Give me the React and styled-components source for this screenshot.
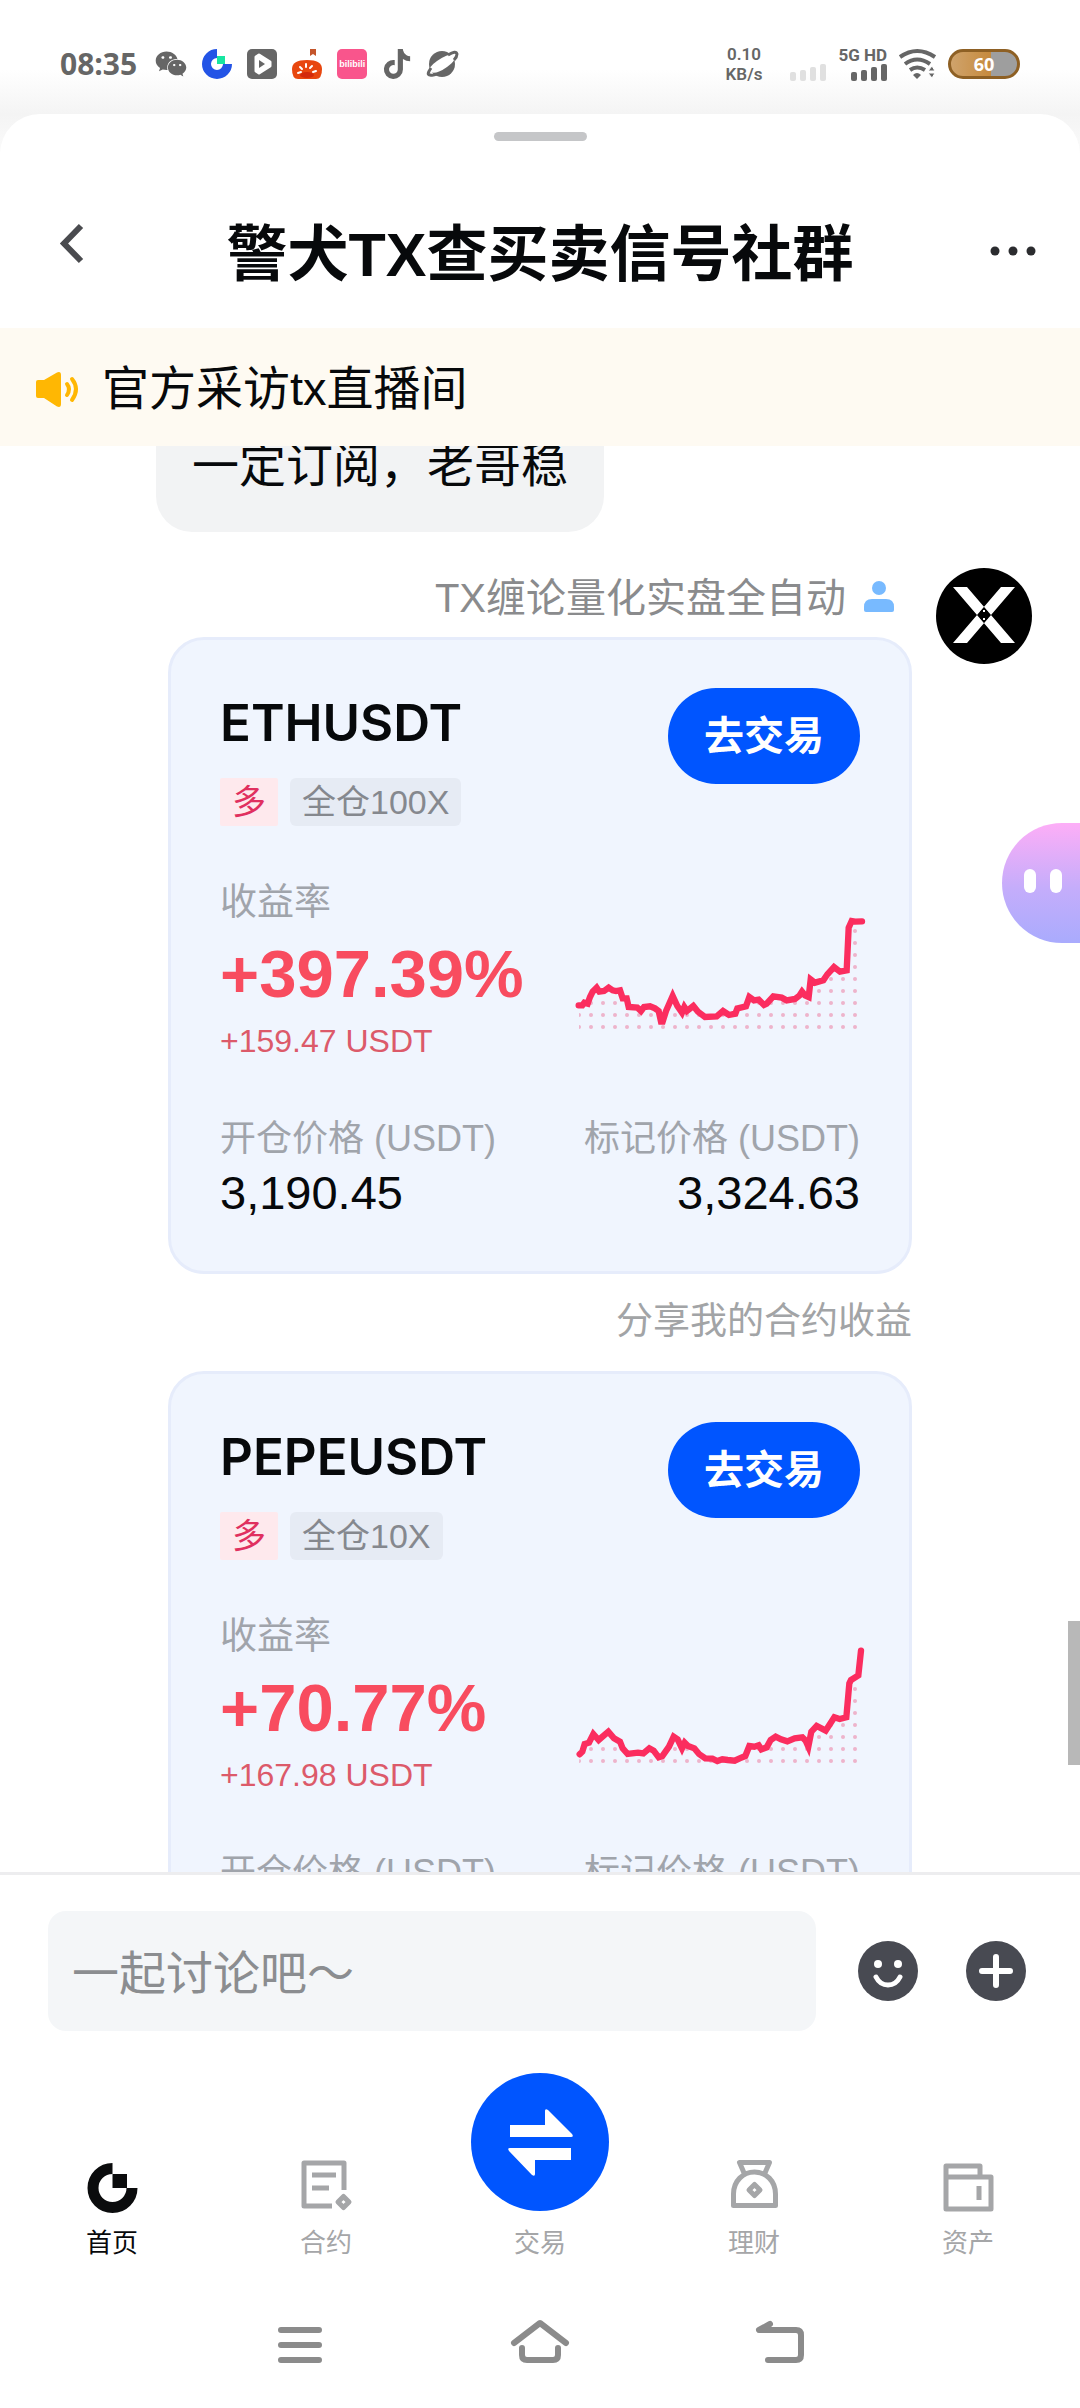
import { useLayoutEffect, useRef } from "react";
import styled, { createGlobalStyle } from "styled-components";
import { FaTiktok, FaWeixin } from "react-icons/fa6";

const positions = [
  {
    id: 1,
    symbol: "ETHUSDT",
    side: "多",
    leverage: "全仓100X",
    rate: "+397.39%",
    profit: "+159.47 USDT",
    open: "3,190.45",
    mark: "3,324.63",
    line: "116,433 127,433 133,425 143,428 150,408 158,392 170,380 178,392 192,390 206,380 218,388 228,390 240,388 248,412 260,412 266,438 292,440 303,450 312,438 330,436 345,442 356,450 363,482 368,482 378,450 398,405 412,435 426,455 433,438 441,450 460,435 474,452 495,468 530,466 549,450 567,462 586,458 592,442 618,436 628,408 642,418 656,416 672,432 680,428 700,406 725,410 740,418 765,414 778,404 786,392 795,403 806,408 812,355 825,365 850,358 862,340 882,318 900,332 920,328 926,200 935,180 945,182 966,181",
  },
  {
    id: 2,
    symbol: "PEPEUSDT",
    side: "多",
    leverage: "全仓10X",
    rate: "+70.77%",
    profit: "+167.98 USDT",
    open: "0.00001",
    mark: "0.00001",
    line: "119,478 127,470 134,447 147,443 160,417 176,435 205,410 222,430 240,440 248,460 263,477 294,473 310,475 328,460 341,467 356,487 367,483 387,455 401,425 413,433 426,460 434,443 444,453 463,460 477,477 496,490 517,491 532,498 547,493 563,495 584,497 599,490 616,483 628,453 643,455 656,451 664,463 680,457 692,435 707,425 723,433 742,439 764,430 787,427 797,437 805,455 814,410 830,393 857,407 883,367 899,372 919,367 928,265 933,255 955,241 963,167",
  },
];

const App = () => {
  return (
    <Screen>
      <GlobalStyle />
      <StatusBar />
      <Sheet>
        <Handle />
        <Header>
          <IconButton aria-label="返回">
            <svg width="60" height="60" fill="none" stroke="#4a4b4f" strokeWidth="6">
              <path d="M39 5L22 22.500L39 40" />
            </svg>
          </IconButton>
          <Title>警犬TX查买卖信号社群</Title>
          <IconButton aria-label="更多">
            <svg width="60" height="60" fill="#2b2c2f">
              <circle cx="17" cy="30" r="4.500" />
              <circle cx="35" cy="30" r="4.500" />
              <circle cx="53" cy="30" r="4.500" />
            </svg>
          </IconButton>
        </Header>
        <Notice>
          <svg width="43" height="37" fill="none" stroke="#ffb703" strokeWidth="4" strokeLinecap="round">
            <path
              d="M3 9H9L22 1.500Q26 0 26 4V33Q26 37 22 35.500L9 27H3Q1 27 1 25V11Q1 9 3 9Z"
              fill="#ffb703"
              stroke="none"
            />
            <path d="M32 13Q36 18 32 24M37 8Q45 18 37 29" />
          </svg>
          官方采访tx直播间
        </Notice>
        <Chat />
        <Composer>
          <MessageInput aria-label="消息" placeholder="一起讨论吧～" />
          <ComposerIcons>
            <IconButton aria-label="表情">
              <svg width="60" height="60">
                <circle cx="30" cy="30" r="30" fill="#484a52" />
                <circle cx="20" cy="23" r="4" fill="#fff" />
                <circle cx="40" cy="23" r="4" fill="#fff" />
                <path d="M18 36Q22 44 30 44T42 36" fill="none" stroke="#fff" strokeWidth="5" strokeLinecap="round" />
              </svg>
            </IconButton>
            <IconButton aria-label="添加">
              <svg width="60" height="60">
                <circle cx="30" cy="30" r="30" fill="#484a52" />
                <path d="M16 30H44M30 16V44" stroke="#fff" strokeWidth="6" strokeLinecap="round" />
              </svg>
            </IconButton>
          </ComposerIcons>
        </Composer>
        <TabBar />
        <SystemBar />
      </Sheet>
    </Screen>
  );
};

const StatusBar = () => {
  return (
    <StatusRow>
      <StatusGroup>
        <Clock>08:35</Clock>
        <AppIcons>
          <FaWeixin size={32} color="#666" />
          <svg width="30" height="30" viewBox="0 0 30 30">
            <path d="M15 4.500A10.500 10.500 0 1 0 25.500 15" fill="none" stroke="#2354e6" strokeWidth="9" />
            <path d="M15 7H23V15H15Z" fill="#17e6a1" />
          </svg>
          <svg width="30" height="30" viewBox="0 0 30 30">
            <rect width="30" height="30" rx="5" fill="#666" />
            <path d="M9 8L12 6L23 13V17L12 24L9 22Z" fill="#fff" stroke="#fff" strokeWidth="3" strokeLinejoin="round" />
            <path d="M12 11L18 15L12 19Z" fill="#666" />
          </svg>
          <svg width="30" height="30" viewBox="0 0 30 30">
            <path d="M18 0H24V7L21 5L18 7Z" fill="#c4552b" />
            <path d="M0 20Q0 11 15 11T30 20Q30 30 24 30H6Q0 30 0 20Z" fill="#e8470f" />
            <ellipse cx="15" cy="26" rx="7" ry="3" fill="#d32a0c" />
            <path d="M6 24L9 23M8 18L10 20M14 15V18M20 17L18 19M24 22L21 23" stroke="#fff" strokeWidth="2" strokeLinecap="round" />
          </svg>
          <PinkBadge>bilibili</PinkBadge>
          <FaTiktok size={30} color="#666" />
          <svg width="31" height="30" viewBox="0 0 31 30">
            <circle cx="15" cy="15" r="13" fill="#666" />
            <path d="M3 23Q0 19 10 12T27 5Q31 10 20 18T3 23Z" fill="#fff" />
            <path d="M4 19Q-1 26 3 26Q6 27 10 25M21 6Q29 1 30 5Q30 8 27 11" fill="none" stroke="#666" strokeWidth="3" />
          </svg>
        </AppIcons>
      </StatusGroup>
      <StatusGroup>
        <NetSpeed>
          <span>0.10</span>
          <span>KB/s</span>
        </NetSpeed>
        <SignalSlot>
          <Bars color="#e0e0e0" />
        </SignalSlot>
        <SignalSlot>
          <NetType>5G HD</NetType>
          <Bars color="#666" />
        </SignalSlot>
        <svg width="37" height="30" viewBox="0 0 37 30" fill="none" stroke="#666" strokeWidth="4">
          <path d="M1 8Q18-4 36 8M6 15Q18 6 31 15M11 21Q18 16 26 21" />
          <path d="M14 26Q18 22 22 26L18 30Z" fill="#666" stroke="none" />
          <path d="M29 22L33 17L36 22ZM29 24H36L33 29Z" fill="#666" stroke="#fff" strokeWidth="1" />
        </svg>
        <Battery>60</Battery>
      </StatusGroup>
    </StatusRow>
  );
};

const Bars = ({ color }) => {
  return (
    <svg width="36" height="17" fill={color}>
      <rect x="0" y="8" width="6" height="9" rx="2" />
      <rect x="10" y="6" width="6" height="11" rx="2" />
      <rect x="20" y="3" width="6" height="14" rx="2" />
      <rect x="30" y="0" width="6" height="17" rx="2" />
    </svg>
  );
};

const Chat = () => {
  const listRef = useRef(null);

  useLayoutEffect(() => {
    listRef.current.scrollTop = 46;
  }, []);

  return (
    <ChatArea>
      <ChatList ref={listRef}>
        <Bubble>一定订阅，老哥稳</Bubble>
        <Message>
          <MessageBody>
            <Sender>
              TX缠论量化实盘全自动
              <svg width="30" height="35" fill="#78baff">
                <circle cx="15" cy="7" r="7" />
                <path d="M0 29V26Q0 18 8 18H22Q30 18 30 26V29Q30 31 28 31H2Q0 31 0 29Z" />
              </svg>
            </Sender>
            {positions.map((position) => {
              return (
                <div key={position.id}>
                  <PositionCard position={position} />
                  <ShareText>分享我的合约收益</ShareText>
                </div>
              );
            })}
          </MessageBody>
          <svg width="96" height="96">
            <circle cx="48" cy="48" r="48" />
            <path d="M17 19H31L79 75H65ZM79 19H65L17 75H31Z" fill="#fff" />
            <path d="M44 44L48 40L52 44ZM44 50L48 54L52 50Z" />
            <path d="M47 43H49M47 51H49" stroke="#fff" strokeWidth="2" />
          </svg>
        </Message>
      </ChatList>
      <Assistant aria-label="助手">
        <AssistantEye />
        <AssistantEye />
      </Assistant>
      <ScrollThumb />
    </ChatArea>
  );
};

const PositionCard = ({ position }) => {
  return (
    <Card>
      <CardTop>
        <div>
          <Symbol>{position.symbol}</Symbol>
          <Tags>
            <Tag $long>{position.side}</Tag>
            <Tag>{position.leverage}</Tag>
          </Tags>
        </div>
        <TradeButton>去交易</TradeButton>
      </CardTop>
      <Yield>
        <div>
          <YieldLabel>收益率</YieldLabel>
          <Rate>{position.rate}</Rate>
          <Profit>{position.profit}</Profit>
        </div>
        <Sparkline id={position.id} line={position.line} />
      </Yield>
      <Prices>
        <Price>
          <dt>开仓价格 (USDT)</dt>
          <dd>{position.open}</dd>
        </Price>
        <Price $end>
          <dt>标记价格 (USDT)</dt>
          <dd>{position.mark}</dd>
        </Price>
      </Prices>
    </Card>
  );
};

const Sparkline = ({ id, line }) => {
  return (
    <Chart viewBox="102 147 858 360">
      <defs>
        <pattern id={`dots-${id}`} x="135" y="444" width="36" height="36" patternUnits="userSpaceOnUse">
          <circle cx="18" cy="18" r="6" fill="#eeb4cb" />
        </pattern>
        <clipPath id={`area-${id}`}>
          <polygon points={`${line} 966,505 117,505`} />
        </clipPath>
      </defs>
      <rect x="117" y="147" width="840" height="360" fill={`url(#dots-${id})`} clipPath={`url(#area-${id})`} />
      <polyline points={line} fill="none" stroke="#fb2d5f" strokeWidth="19" strokeLinecap="round" />
    </Chart>
  );
};

const TabBar = () => {
  return (
    <Tabs>
      <Tab href="#home" $active>
        <svg width="51" height="51">
          <path d="M25.500 8.500A19.500 19.500 0 1 0 45 28" fill="none" stroke="#0b0c0d" strokeWidth="11" />
          <path d="M25.500 14H40V28H25.500Z" fill="#0b0c0d" />
        </svg>
        首页
      </Tab>
      <Tab href="#futures">
        <svg width="51" height="51" fill="none" stroke="#a5a6a8" strokeWidth="5" strokeLinejoin="round">
          <path d="M43 30V3H3V46H31M11 15H35M11 28H28" />
          <path d="M42.500 36.500L48 42L42.500 47.500L37 42Z" />
        </svg>
        合约
      </Tab>
      <Tab href="#trade">
        <svg width="138" height="138">
          <circle cx="69" cy="69" r="69" fill="#0055ff" />
          <path
            d="M39 52H74V38Q74 35 77 37L101 61Q103 64 100 64H39ZM100 75H39Q36 75 38 78L61 102Q64 104 64 101V87H100Z"
            fill="#fff"
          />
        </svg>
        交易
      </Tab>
      <Tab href="#finance">
        <svg width="51" height="51" fill="none" stroke="#a5a6a8" strokeWidth="5" strokeLinejoin="round">
          <path d="M4.500 45.500V34C4.500 21 14 12 25.500 12S46.500 21 46.500 34V45.500ZM15.500 14L10.500 2.500H40.500L35.500 14" />
          <path d="M25.500 24.500L31 30L25.500 35.500L20 30Z" />
        </svg>
        理财
      </Tab>
      <Tab href="#assets">
        <svg width="51" height="51" fill="none" stroke="#a5a6a8" strokeWidth="5" strokeLinejoin="round">
          <path d="M3 18V6H37V17M3 17H48V49H3ZM36 26V40" />
        </svg>
        资产
      </Tab>
    </Tabs>
  );
};

const SystemBar = () => {
  return (
    <SystemRow>
      <IconButton aria-label="最近任务">
        <SystemIcon>
          <path d="M11 15H49M11 30H49M11 45H49" />
        </SystemIcon>
      </IconButton>
      <IconButton aria-label="主屏幕">
        <SystemIcon>
          <path d="M4 28L30 8L56 28M12 33V40Q12 45 17 45H43Q48 45 48 40V33" />
        </SystemIcon>
      </IconButton>
      <IconButton aria-label="后退">
        <SystemIcon>
          <path d="M20 9L9 15H46Q51 15 51 20V40Q51 45 46 45H18" />
        </SystemIcon>
      </IconButton>
    </SystemRow>
  );
};

const GlobalStyle = createGlobalStyle`
  * {
    box-sizing: border-box;
  }

  body {
    margin: 0;
    background: #fff;
    color: #07090b;
    font-family: "Liberation Sans", "Noto Sans CJK SC", sans-serif;
  }

  svg {
    display: block;
    flex-shrink: 0;
    overflow: visible;
  }

  button, input {
    font-family: inherit;
  }
`;

const Screen = styled.div`
  display: flex;
  flex-direction: column;
  height: 100vh;
  background: linear-gradient(#fff 70px, #f4f4f4 114px, #fafafa 150px);
`;

const StatusRow = styled.div`
  display: flex;
  justify-content: space-between;
  height: 114px;
  padding: 44px 60px 30px;
`;

const StatusGroup = styled.div`
  display: flex;
  align-items: center;
  gap: 12px;
`;

const Clock = styled.span`
  color: #666;
  font-family: "Open Sans", sans-serif;
  font-size: 30px;
  font-weight: 700;
  line-height: 40px;
`;

const AppIcons = styled.div`
  display: flex;
  align-items: center;
  gap: 15px;
  padding-left: 6px;
`;

const PinkBadge = styled.span`
  width: 30px;
  border-radius: 5px;
  background: #f9558c;
  color: #fff;
  font-size: 9px;
  font-weight: 700;
  line-height: 30px;
  text-align: center;
`;

const NetSpeed = styled.span`
  display: flex;
  flex-direction: column;
  align-items: center;
  margin-right: 16px;
  color: #666;
  font-family: Roboto, sans-serif;
  font-size: 17px;
  font-weight: 600;
  line-height: 20px;
`;

const SignalSlot = styled.span`
  display: flex;
  flex-direction: column;
  align-items: flex-end;
  justify-content: flex-end;
  height: 34px;
`;

const NetType = styled.span`
  color: #666;
  font-family: Roboto, sans-serif;
  font-size: 17px;
  font-weight: 700;
  line-height: 17px;
`;

const Battery = styled.span`
  width: 72px;
  height: 30px;
  border: 3px solid #8e6024;
  border-radius: 15px;
  background: linear-gradient(90deg, #cfa36c, #c68a3d 60%, #9e9e9e 60%);
  color: #fff;
  font-family: "Open Sans", sans-serif;
  font-size: 18px;
  font-weight: 700;
  line-height: 24px;
  text-align: center;
`;

const Sheet = styled.main`
  display: flex;
  flex: 1;
  flex-direction: column;
  min-height: 0;
  border-radius: 40px 40px 0 0;
  background: #fff;
`;

const Handle = styled.div`
  align-self: center;
  width: 93px;
  height: 9px;
  margin: 18px 0 64px;
  border-radius: 5px;
  background: #c5c6c8;
`;

const Header = styled.header`
  display: flex;
  align-items: center;
  justify-content: space-between;
  padding: 0 42px 31px;
`;

const IconButton = styled.button`
  padding: 0;
  border: 0;
  background: none;
`;

const Title = styled.h1`
  margin: 0;
  padding-top: 8px;
  font-size: 61px;
  font-weight: 700;
  line-height: 84px;
`;

const Notice = styled.div`
  display: flex;
  align-items: center;
  gap: 24px;
  padding: 31px 35px 27px;
  background: #fefaf2;
  font-size: 47px;
  line-height: 60px;
`;

const ChatArea = styled.section`
  position: relative;
  display: flex;
  flex: 1;
  flex-direction: column;
  min-height: 0;
`;

const ChatList = styled.div`
  flex: 1;
  min-height: 0;
  overflow-y: scroll;
  scrollbar-width: none;
`;

const Bubble = styled.p`
  width: fit-content;
  margin: 0 0 36px 156px;
  padding: 36px;
  border-radius: 36px;
  background: #f2f3f4;
  font-size: 47px;
  line-height: 60px;
`;

const Message = styled.article`
  display: flex;
  align-items: flex-start;
  gap: 24px;
  padding: 0 48px 0 168px;
`;

const MessageBody = styled.div`
  flex: 1;
`;

const Sender = styled.div`
  display: flex;
  align-items: center;
  justify-content: flex-end;
  gap: 18px;
  margin-bottom: 9px;
  padding-right: 18px;
  color: #8a8b8d;
  font-size: 40px;
  line-height: 60px;
`;

const Card = styled.div`
  padding: 48px 49px;
  border: 3px solid #e6ecfb;
  border-radius: 36px;
  background: #f0f5fe;
`;

const CardTop = styled.div`
  display: flex;
  align-items: flex-start;
  justify-content: space-between;
`;

const Symbol = styled.h2`
  margin: 0 0 20px;
  font-family: Inter, sans-serif;
  font-size: 51px;
  font-weight: 600;
  line-height: 70px;
`;

const Tags = styled.div`
  display: flex;
  gap: 12px;
`;

const Tag = styled.span`
  padding: 0 12px;
  border-radius: ${(props) => (props.$long ? "2px" : "6px")};
  background: ${(props) => (props.$long ? "#fee9ed" : "#e6ebf4")};
  color: ${(props) => (props.$long ? "#e0305f" : "#85888e")};
  font-size: 34px;
  line-height: 48px;
`;

const TradeButton = styled.button`
  padding: 0 36px;
  border: 0;
  border-radius: 48px;
  background: #0055ff;
  color: #fff;
  font-size: 40px;
  font-weight: 700;
  line-height: 96px;
`;

const Yield = styled.div`
  display: flex;
  align-items: center;
  justify-content: space-between;
  margin: 53px 0 54px;
`;

const YieldLabel = styled.div`
  color: #a0a4ab;
  font-size: 37px;
  line-height: 48px;
`;

const Rate = styled.div`
  color: #f84c5f;
  font-size: 67px;
  font-weight: 700;
  line-height: 94px;
`;

const Profit = styled.div`
  color: #dc5a6a;
  font-size: 32px;
  line-height: 40px;
`;

const Chart = styled.svg`
  width: 286px;
  height: 120px;
`;

const Prices = styled.dl`
  display: flex;
  justify-content: space-between;
  margin: 0;
`;

const Price = styled.div`
  text-align: ${(props) => (props.$end ? "right" : "left")};

  dt {
    color: #a0a4ab;
    font-size: 36px;
    line-height: 48px;
  }

  dd {
    margin: 0;
    font-size: 47px;
    line-height: 60px;
  }
`;

const ShareText = styled.p`
  margin: 0;
  padding: 24px 0 25px;
  color: #a2a4a6;
  font-size: 37px;
  line-height: 48px;
  text-align: right;
`;

const Assistant = styled.button`
  position: absolute;
  top: 377px;
  right: 0;
  display: flex;
  align-items: center;
  gap: 14px;
  width: 78px;
  height: 120px;
  padding: 0 0 4px 22px;
  border: 0;
  border-radius: 60px 0 0 60px;
  background: linear-gradient(#fdaef7, #c4adfb 55%, #a9abfd);
`;

const AssistantEye = styled.span`
  width: 12px;
  height: 24px;
  border-radius: 6px;
  background: #fff;
`;

const ScrollThumb = styled.div`
  position: absolute;
  right: 0;
  bottom: 107px;
  width: 12px;
  height: 144px;
  background: #b8b8b8;
`;

const Composer = styled.div`
  display: flex;
  align-items: center;
  gap: 42px;
  padding: 36px 54px 0 48px;
  border-top: 3px solid #ededef;
`;

const MessageInput = styled.input`
  flex: 1;
  min-width: 0;
  height: 120px;
  padding: 5px 24px 0;
  border: 0;
  border-radius: 18px;
  background: #f4f6f8;
  font-size: 47px;

  &::placeholder {
    color: #8b8d90;
  }
`;

const ComposerIcons = styled.div`
  display: flex;
  gap: 48px;
`;

const Tabs = styled.nav`
  display: grid;
  grid-template-columns: repeat(5, 1fr);
  align-items: end;
  padding: 42px 5px 0;
`;

const Tab = styled.a`
  display: flex;
  flex-direction: column;
  align-items: center;
  gap: 12px;
  color: ${(props) => (props.$active ? "#07090b" : "#a5a6a8")};
  font-size: 26px;
  line-height: 40px;
  text-decoration: none;
`;

const SystemRow = styled.div`
  display: flex;
  justify-content: center;
  gap: 180px;
  padding: 52px 0 33px;
`;

const SystemIcon = styled.svg.attrs({ width: 60, height: 60 })`
  fill: none;
  stroke: #8b8b8b;
  stroke-width: 6px;
  stroke-linecap: round;
  stroke-linejoin: round;
`;

export default App;
